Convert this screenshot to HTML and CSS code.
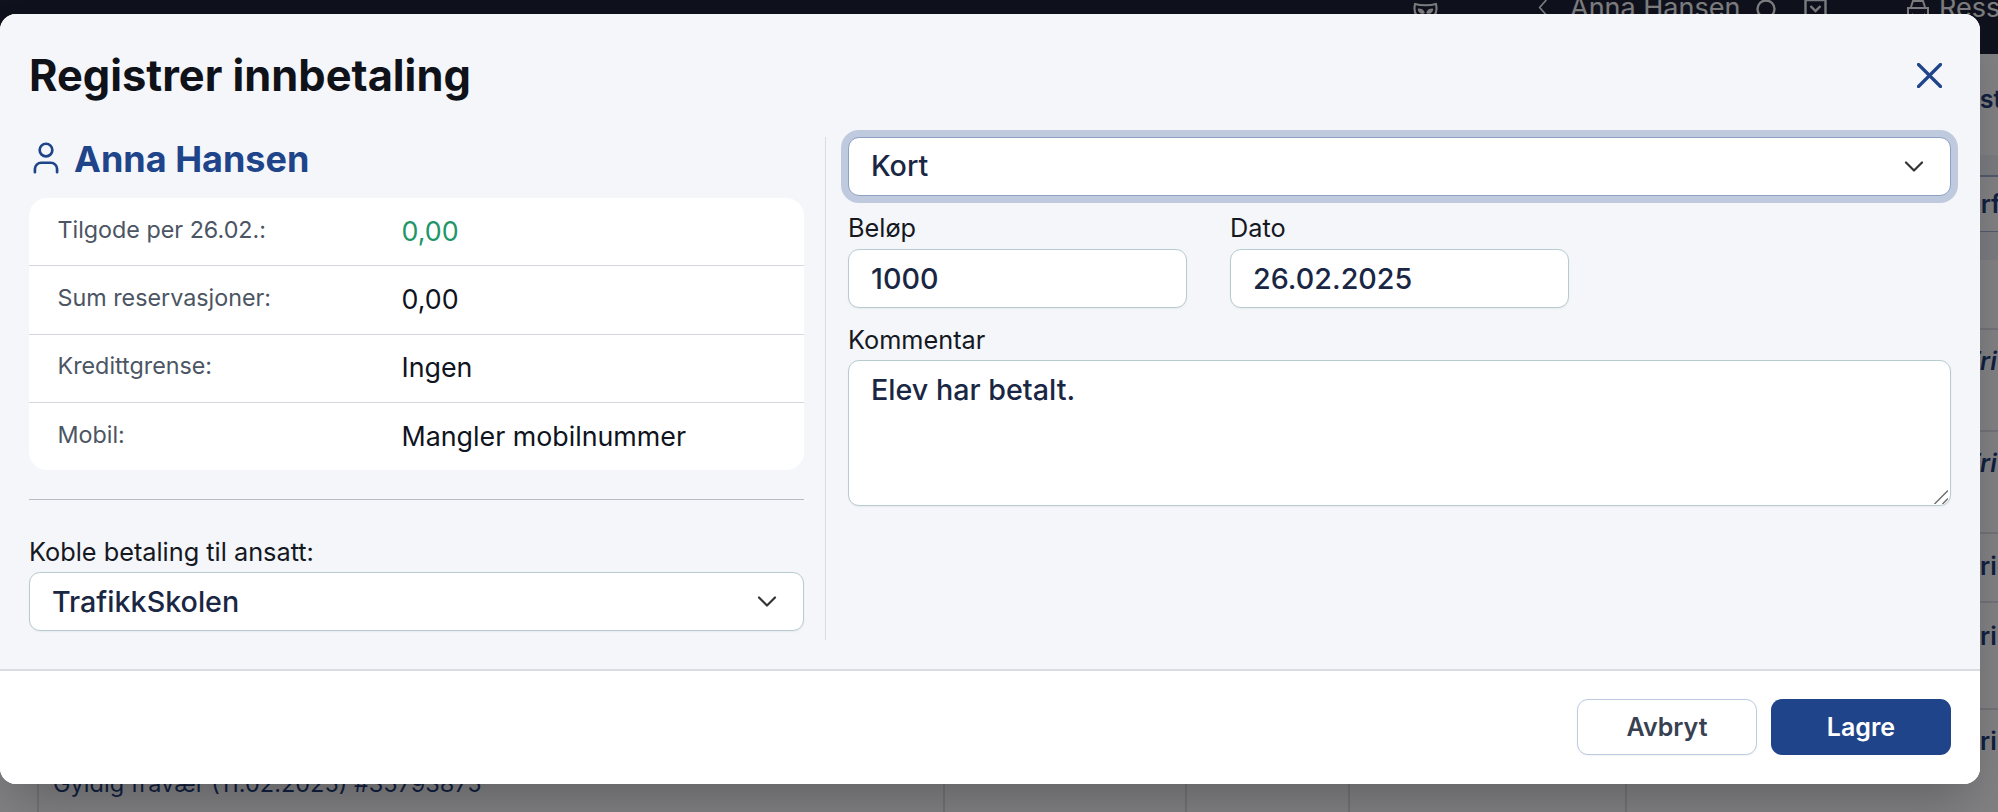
FILE: index.html
```html
<!DOCTYPE html>
<html lang="no">
<head>
<meta charset="utf-8">
<title>Registrer innbetaling</title>
<link rel="stylesheet" href="styles.css">
</head>
<body>
<div class="page">
  <header class="topbar">
    <svg class="nav-mask" viewBox="0 0 26 20" fill="none" stroke="currentColor" stroke-width="2.200" stroke-linejoin="round"><path d="M2 2c3 1 7 1.500 11 1.500S21 3 24 2c1 4 1 9-2 13-2 3-5 4-9 4s-7-1-9-4C1 11 1 6 2 2z"/><path d="M6 8c2 0 4 1 5 3-2 1-4 0-5-3zM20 8c-2 0-4 1-5 3 2 1 4 0 5-3z"/></svg>
    <svg class="nav-back" viewBox="0 0 12 20" fill="none" stroke="currentColor" stroke-width="2"><path d="M10 1L2 10l8 9"/></svg>
    <span class="nav-name">Anna Hansen</span>
    <svg class="nav-circle" viewBox="0 0 22 22" fill="none" stroke="currentColor" stroke-width="2.400"><circle cx="11" cy="10" r="8.500"/></svg>
    <svg class="nav-check" viewBox="0 0 24 22" fill="none" stroke="currentColor" stroke-width="2.400"><path d="M2 1h20v21H2z"/><path d="M7 7l5 5 5-5"/></svg>
    <svg class="nav-car" viewBox="0 0 24 22" fill="none" stroke="currentColor" stroke-width="2"><path d="M5 8l2-6h10l2 6M2 9h20v11H2zM6 15h.500M18 15h.500"/></svg>
    <span class="nav-res">Ressurser</span>
  </header>
  <main class="table">
    <div class="row row-head"><span class="cell-last bold">Restanse</span></div>
    <div class="row row-band"></div>
    <div class="row row-sub"><span class="cell-last bold">Perfekt</span></div>
    <div class="row row-band2"></div>
    <div class="row row-a"></div>
    <div class="row row-b"><span class="cell-last bold italic">Fri</span></div>
    <div class="row row-b"><span class="cell-last bold italic">Fri</span></div>
    <div class="row row-c"><span class="cell-last bold">Fri</span></div>
    <div class="row row-d"><span class="cell-last bold">Fri</span></div>
    <div class="row row-e">
      <span class="col col-1"></span><span class="col col-2">Gyldig fravær (11.02.2025) #35793875</span>
      <span class="col col-3"></span><span class="col col-4"></span><span class="col col-5"></span>
      <span class="cell-last bold">Fri</span>
    </div>
  </main>
  <div class="overlay"></div>
</div>

<section class="modal">
  <div class="modal-main">
    <div class="modal-head">
      <h1 class="title">Registrer innbetaling</h1>
      <svg class="close" viewBox="0 0 25 25" fill="none" stroke="currentColor" stroke-width="3.200" stroke-linecap="round"><path d="M1.500 1.500l22 22M23.500 1.500l-22 22"/></svg>
    </div>
    <div class="columns">
      <div class="col-left">
        <div class="student">
          <svg class="user" viewBox="0 0 24 24" fill="none" stroke="currentColor" stroke-width="1.700" stroke-linecap="round" stroke-linejoin="round"><path d="M19 21v-2a4 4 0 0 0-4-4H9a4 4 0 0 0-4 4v2"/><circle cx="12" cy="7" r="4"/></svg>
          <span class="student-name">Anna Hansen</span>
        </div>
        <div class="card">
          <div class="info"><span class="info-label">Tilgode per 26.02.:</span><span class="info-value green">0,00</span></div>
          <div class="info"><span class="info-label">Sum reservasjoner:</span><span class="info-value">0,00</span></div>
          <div class="info"><span class="info-label">Kredittgrense:</span><span class="info-value">Ingen</span></div>
          <div class="info"><span class="info-label">Mobil:</span><span class="info-value">Mangler mobilnummer</span></div>
        </div>
        <hr class="rule">
        <label class="label" for="ansatt">Koble betaling til ansatt:</label>
        <div class="select-wrap">
          <select id="ansatt" class="control select"><option>TrafikkSkolen</option></select>
          <svg class="chev" viewBox="0 0 20 11" fill="none" stroke="currentColor" stroke-width="2.200" stroke-linecap="round" stroke-linejoin="round"><path d="M2 1.500l8 8 8-8"/></svg>
        </div>
      </div>
      <div class="col-right">
        <div class="select-wrap">
          <select class="control select focused" aria-label="Betalingsmåte"><option>Kort</option></select>
          <svg class="chev" viewBox="0 0 20 11" fill="none" stroke="currentColor" stroke-width="2.200" stroke-linecap="round" stroke-linejoin="round"><path d="M2 1.500l8 8 8-8"/></svg>
        </div>
        <div class="pair">
          <div class="field">
            <label class="label label-pair" for="belop">Beløp</label>
            <input id="belop" class="control" value="1000">
          </div>
          <div class="field">
            <label class="label label-pair" for="dato">Dato</label>
            <input id="dato" class="control" value="26.02.2025">
          </div>
        </div>
        <label class="label label-comment" for="kommentar">Kommentar</label>
        <div class="area-wrap">
          <textarea id="kommentar" class="control area">Elev har betalt.</textarea>
          <svg class="grip" viewBox="0 0 14 14" fill="none" stroke="#6d6d6d" stroke-width="1.400"><path d="M.5 14L14 .5M8.500 14L14 8.500"/></svg>
        </div>
      </div>
    </div>
  </div>
  <footer class="modal-foot">
    <button class="btn btn-ghost">Avbryt</button>
    <button class="btn btn-primary">Lagre</button>
  </footer>
</section>
</body>
</html>
```
FILE: styles.css
```css
* { box-sizing: border-box; }
html, body { margin: 0; height: 100%; overflow: hidden; }
body { font-family: Inter, "Liberation Sans", sans-serif; background: #fff; color: #111827; position: relative; }

.page { position: relative; height: 812px; overflow: hidden; }
.topbar {
  height: 54px; background: #1b2030; color: #f4f5f7; display: flex; align-items: flex-start;
  font-size: 27px; line-height: 30px; overflow: hidden; padding-left: 1413px; white-space: nowrap;
}
.topbar span { margin-top: -7px; }
.nav-mask { width: 25px; height: 19px; margin-top: 2px; flex: none; }
.nav-back { width: 10px; height: 19px; margin: -2px 0 0 100px; flex: none; }
.nav-name { margin-left: 22px; width: 169px; flex: none; }
.nav-circle { width: 22px; height: 22px; margin: -1px 0 0 16px; flex: none; }
.nav-check { width: 25px; height: 22px; margin: -1px 0 0 26px; flex: none; }
.nav-car { width: 24px; height: 22px; margin: -1px 0 0 78px; flex: none; }
.nav-res { margin-left: 9px; }

.table { display: flex; flex-direction: column; font-size: 25px; color: #1f3c78; }
.row { position: relative; border-bottom: 2px solid #dfe1e6; display: flex; overflow: hidden; white-space: nowrap; flex: none; }
.cell-last { position: absolute; left: 1968px; }
.bold { font-weight: 600; }
.italic { font-style: italic; }
.row-head { height: 101px; border: 0; }
.row-head .cell-last { top: 30px; left: 1949px; }
.row-band { height: 22px; background: #f1f2f4; border-bottom: 2px solid #9fb0cf; }
.row-sub { height: 55px; border-bottom: 1px solid #9fb0cf; }
.row-sub .cell-last { top: 12px; left: 1950px; }
.row-band2 { height: 28px; background: #f1f2f4; border: 0; }
.row-a { height: 70px; }
.row-b { height: 102px; }
.row-b .cell-last { top: 16px; left: 1966px; }
.row-c { height: 69px; }
.row-c .cell-last { top: 17px; left: 1966px; }
.row-d { height: 107px; }
.row-d .cell-last { top: 18px; left: 1966px; }
.row-e { flex: 1 0 103px; border: 0; }
.row-e .cell-last { top: 16px; left: 1966px; }
.col { height: 120px; border-right: 2px solid #dfe1e6; flex: none; }
.col-1 { width: 39px; }
.col-2 { width: 906px; padding: 59px 0 0 14px; font-size: 23.500px; line-height: 30px; }
.col-3 { width: 242px; }
.col-4 { width: 163px; }
.col-5 { width: 277px; }

.overlay { position: absolute; inset: 0; background: rgba(4, 4, 8, 0.5); }

.modal {
  position: absolute; top: 14px; left: 0; width: 1980px; height: 770px; border-radius: 16px;
  overflow: hidden; display: flex; flex-direction: column; background: #fff;
  box-shadow: 0 25px 50px -12px rgba(0, 0, 0, 0.25);
}
.modal-main { flex: 1; background: #f4f6fa; padding: 0 29px; }
.modal-head { height: 123px; display: flex; align-items: center; justify-content: space-between; }
.title { margin: 0 0 1px; font-size: 43.400px; line-height: 50px; font-weight: 700; color: #0f1218; }
.close { width: 25px; height: 25px; color: #20448a; margin-right: 9px; }

.columns { display: grid; grid-template-columns: 797px 1fr; height: 503px; }
.col-left { border-right: 1px solid #d9dce2; padding-right: 21px; }
.col-right { padding-left: 22px; }

.student { display: flex; align-items: center; height: 42px; margin-bottom: 19px; color: #20448a; }
.user { width: 38px; height: 38px; margin-left: -2px; flex: none; }
.student-name { margin-left: 9px; padding-top: 2px; font-size: 36px; line-height: 42px; font-weight: 700; }

.card { background: #fff; border-radius: 18px; overflow: hidden; height: 272px; }
.info { display: grid; grid-template-columns: 344px 1fr; align-items: center; height: 68.250px; padding-left: 28.500px; border-bottom: 1px solid #d4d7dc; }
.info:last-child { border-bottom: 0; }
.info-label { font-size: 23.300px; line-height: 30px; color: #4b5563; padding-bottom: 4px; }
.info-value { font-size: 26.800px; line-height: 34px; color: #0f1420; padding-bottom: 2px; }
.green { color: #219668; }

.rule { border: 0; border-top: 1px solid #b9bcc2; margin: 29px 0 37px; }
.label { display: block; font-size: 25.300px; line-height: 30px; color: #15181f; margin-bottom: 5px; }
.label-pair { margin-bottom: 6px; }

.select-wrap, .area-wrap { position: relative; }
.control {
  display: block; width: 100%; height: 59px; padding: 0 22px; background: #fff; border: 1px solid #b7ccd1; border-radius: 11px;
  font-family: Inter, "Liberation Sans", sans-serif; font-size: 28.700px; font-weight: 450; color: #1a2744; outline: 0; margin: 0;
  box-shadow: 0 1px 2px rgba(0, 0, 0, 0.05);
}
.select { appearance: none; -webkit-appearance: none; }
.focused { height: 59px; padding-bottom: 2px; border-color: #8da1c3; box-shadow: 0 0 0 7px #bfcadf; color: #1a2744; }
.chev { position: absolute; right: 27px; top: 24px; width: 20px; height: 11px; color: #333; }

.pair { display: grid; grid-template-columns: 339px 339px; column-gap: 43px; margin-top: 17px; }
.label-comment { margin-top: 17px; }
.area { height: 146px; padding: 12px 22px; line-height: 34px; resize: none; }
.grip { position: absolute; right: 3px; bottom: 2px; width: 14px; height: 14px; pointer-events: none; }

.modal-foot { height: 115px; flex: none; background: #fff; border-top: 2px solid #d9dce3; display: flex; justify-content: flex-end; align-items: center; gap: 14px; padding: 0 29px 2px 0; }
.btn { width: 180px; height: 56px; border-radius: 11px; font-family: Inter, "Liberation Sans", sans-serif; font-size: 25px; font-weight: 600; cursor: pointer; }
.btn-ghost { background: #fff; border: 1px solid #bccbe2; color: #374151; box-shadow: 0 1px 2px rgba(0, 0, 0, 0.05); }
.btn-primary { background: #20448a; border: 0; color: #fff; }
```
